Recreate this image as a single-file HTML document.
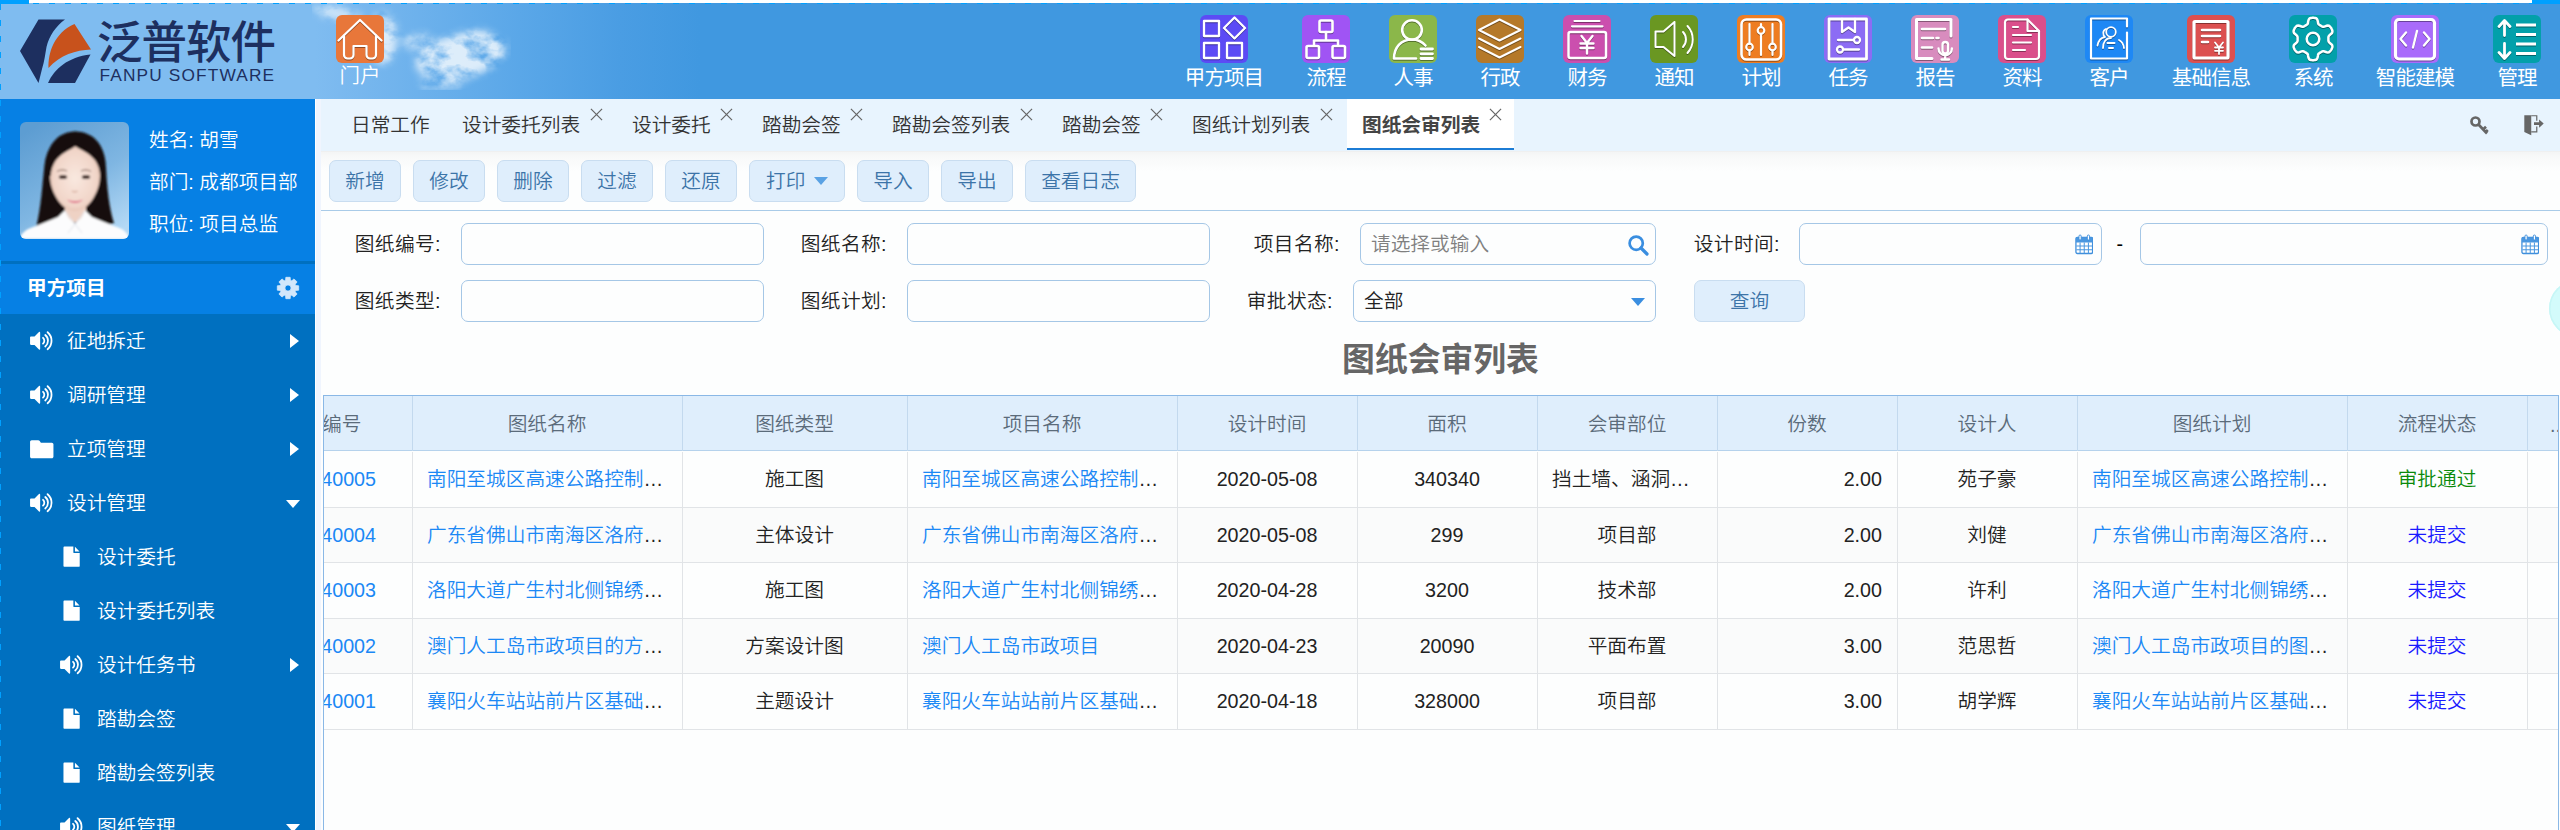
<!DOCTYPE html>
<html lang="zh-CN">
<head>
<meta charset="utf-8">
<title>图纸会审列表</title>
<style>
*{box-sizing:border-box;margin:0;padding:0}
html,body{width:2560px;height:830px;overflow:hidden;background:#fdfefe}
body{font-family:"Liberation Sans","Noto Sans CJK SC",sans-serif;font-size:19.7px;color:#222;position:relative;font-weight:350}
.abs{position:absolute}
/* top strip */
#strip{left:0;top:0;width:2560px;height:3px;background:#fff;z-index:5}
#strip .l{left:0;top:0;width:29px;height:4px;background:#00a0ff}
#strip .r{left:2532px;top:0;width:28px;height:4px;background:#00a0ff}
#dash{left:29px;top:3px;width:2503px;height:1px;background:repeating-linear-gradient(90deg,transparent 0,transparent 4px,#00a0ff 4px,#00a0ff 10px,transparent 10px,transparent 16px)}
/* header */
#header{left:0;top:3px;width:2560px;height:96px;background:linear-gradient(90deg,#7fbcf0 0,#7fbcf0 315px,#7bb9ef 340px,#5aa7e8 520px,#4a9de3 620px,#4098e0 700px,#4098e0 100%);overflow:hidden}
#logobg{left:0;top:0;width:315px;height:96px;background:#7fbcf0}
.nav{position:absolute;top:12px;width:120px;margin-left:-60px;text-align:center;color:#fff;font-size:20.5px;line-height:24px;white-space:nowrap;letter-spacing:-0.9px;font-weight:400}
.nav.home{font-size:20.5px;font-weight:350;line-height:20px;letter-spacing:0}
.nav .ic{display:block;width:48px;height:48px;border-radius:6px;margin:0 auto 2.5px;position:relative;overflow:hidden}
.nav .ic svg{position:absolute;left:0;top:0;width:48px;height:48px}
/* sidebar */
#side{left:0;top:99px;width:315px;height:731px;background:#0070c0;overflow:hidden;color:#fff}
#user{left:0;top:0;width:315px;height:162px;background:#0680e4}
#user .t{position:absolute;left:149px;font-size:19.7px;line-height:26px;letter-spacing:0;white-space:nowrap}
#sep{left:0;top:162px;width:315px;height:3px;background:#0070c0}
#mhead{left:0;top:165px;width:315px;height:50px;background:#0680e4;font-weight:700;font-size:19.7px;line-height:49px;padding-left:27px;letter-spacing:0}
.mi{position:absolute;left:0;width:315px;height:54px;line-height:54px;font-size:19.7px;letter-spacing:0;white-space:nowrap}
.mi .tx{position:absolute;left:67px;top:0}
.mi.sub .tx{left:97px}
.mi svg.i{position:absolute;left:28.5px;top:15px;width:25.5px;height:23.4px}
.mi.sub svg.i{left:58.5px}
.mi .ar{position:absolute;left:290px;top:20px;width:0;height:0;border-left:9px solid #fff;border-top:7px solid transparent;border-bottom:7px solid transparent}
.mi .ad{position:absolute;left:286px;top:24px;width:0;height:0;border-top:8px solid #fff;border-left:7px solid transparent;border-right:7px solid transparent}
#ledge{left:0;top:4px;width:1px;height:826px;background:repeating-linear-gradient(180deg,#00a0ff 0,#00a0ff 6px,transparent 6px,transparent 16px)}
/* gutter */
#gut{left:315px;top:99px;width:6px;height:731px;background:#f0f5fe;border-left:1px solid #fff}
/* tabs */
#tabs{left:321px;top:99px;width:2239px;height:52px;background:#e8f4fe}
.tab{position:absolute;top:0;height:52px;line-height:52px;font-size:19.7px;color:#333;white-space:nowrap;letter-spacing:0}
.tab .x{position:absolute;top:8px;width:14px;height:14px}
#tabact{left:1026px;top:0;width:167px;height:51px;background:#fff;border-bottom:2px solid #1c7cd5}
/* toolbar */
#tool{left:321px;top:151px;width:2239px;height:60px;background:linear-gradient(180deg,#ebebeb 0,#f4f5f5 1px,#f8f9f9 6px,#fdfefe 20px);border-bottom:1px solid #a9cbe8}
.btn{position:absolute;top:9px;height:42px;line-height:40px;border:1px solid #c9ddf0;background:#dfeefc;border-radius:7px;color:#3c74a8;font-size:19.7px;text-align:center;letter-spacing:0;white-space:nowrap}
/* form */
.lab{position:absolute;height:42px;line-height:42px;font-size:19.7px;color:#222;text-align:right;white-space:nowrap;letter-spacing:.4px}
.inp{position:absolute;height:42px;border:1px solid #a5c7e6;border-radius:7px;background:#fdfefe}
#title{left:321px;top:336px;width:2239px;text-align:center;font-size:32.8px;line-height:48px;font-weight:700;color:#666;letter-spacing:0}
/* table */
#tbl{left:323px;top:395px;width:2236px;height:435px;border-left:1px solid #8ab8e6;border-right:1px solid #8ab8e6;border-top:1px solid #8ab8e6;overflow:hidden}
#thead{left:0;top:0;width:2236px;height:55px;background:#dfeefc;border-bottom:1px solid #b5d2ec}
.th{position:absolute;top:0;height:55px;line-height:57px;text-align:center;color:#5b6b7a;font-size:19.7px;border-right:1px solid #c3d9ee;white-space:nowrap;letter-spacing:0}
.tr{position:absolute;left:0;width:2236px;height:55.5px;border-bottom:1px solid #e1e4e7}
.td{position:absolute;top:0;height:55px;line-height:54px;text-align:center;font-size:19.7px;border-right:1px solid #e1e4e7;white-space:nowrap;overflow:hidden;color:#222;letter-spacing:0}
.td.l{text-align:left;padding-left:15px}
.td.r{text-align:right;padding-right:15px}
.lk{color:#1b88f5}
</style>
</head>
<body>
<div id="strip" class="abs"><div class="l abs"></div><div class="r abs"></div></div>
<div id="header" class="abs">
  <div id="logobg" class="abs"></div>
  <svg class="abs" style="left:300px;top:0;width:260px;height:95px" viewBox="0 0 260 95">
<defs><filter id="cl" x="0" y="0" width="100%" height="100%" color-interpolation-filters="sRGB">
<feTurbulence type="fractalNoise" baseFrequency="0.045 0.06" numOctaves="4" seed="7" result="n"/>
<feColorMatrix in="n" type="matrix" values="0 0 0 0 1  0 0 0 0 1  0 0 0 0 1  2.6 0 0 0 -0.62" result="na"/>
<feGaussianBlur in="SourceGraphic" stdDeviation="4.5" result="b"/>
<feComposite in="b" in2="na" operator="in" result="c"/>
<feGaussianBlur in="c" stdDeviation="0.6"/>
</filter></defs>
<g filter="url(#cl)" fill="#fff" opacity=".78" transform="translate(-9 1)">
<ellipse cx="92" cy="34" rx="14" ry="26" opacity=".95"/>
<ellipse cx="48" cy="10" rx="26" ry="7" opacity=".8" transform="rotate(14 48 10)"/>
<ellipse cx="170" cy="52" rx="46" ry="22" opacity="1" transform="rotate(-12 170 52)"/>
<ellipse cx="185" cy="44" rx="26" ry="18" opacity="1"/>
<ellipse cx="160" cy="62" rx="30" ry="14" opacity="1"/>
<ellipse cx="128" cy="38" rx="16" ry="8" opacity=".8"/>
<ellipse cx="150" cy="80" rx="22" ry="6" opacity=".7"/>
</g></svg>
  <svg class="abs" style="left:18px;top:14px;width:76px;height:68px" viewBox="0 0 76 68">
<path d="M2 34L20.500 2.500H47C38 9 31 19 28.500 30 27 38 26.500 44 24 52L20.500 66z" fill="#1d2f5f"/>
<path d="M30.500 51C30 36 36 16 56.500 7L73 32.500C58 33 42 38 30.500 51z" fill="#c8521c"/>
<path d="M30 66C36 52 50 40 72.500 37.500L57 66z" fill="#1d2f5f"/>
</svg>
<div class="abs" style="left:97px;top:13px;width:190px;height:56px;font-size:45.500px;line-height:56px;font-weight:500;color:#1d2f5f;letter-spacing:-1px;white-space:nowrap">泛普软件</div>
<div class="abs" style="left:99.500px;top:61px;width:190px;height:22px;font-size:17.300px;line-height:22px;font-weight:400;color:#1d2f5f;letter-spacing:1.15px;white-space:nowrap">FANPU SOFTWARE</div>
  <div class="nav home" style="left:360px"><span class="ic" style="background:#e8773a"><svg viewBox="0 0 48 48"><g stroke="#fff" fill="none" stroke-linecap="round" stroke-linejoin="round" stroke-width="2.2" style="filter:drop-shadow(.7px 1px .5px rgba(0,0,0,.38))"><path d="M2.5 25.5L24 5l21.5 20.5"/><path d="M8 20.5V40a3.5 3.5 0 0 0 3.5 3.5h2.500a3.500 3.500 0 0 0 3.500-3.500V31h13v9a3.500 3.500 0 0 0 3.500 3.500h2.500A3.500 3.500 0 0 0 40 40V20.500"/></g></svg></span>门户</div>
<div class="nav" style="left:1224px"><span class="ic" style="background:#5c4bf5"><svg viewBox="0 0 48 48"><g stroke="#fff" fill="none" stroke-linecap="round" stroke-linejoin="round" stroke-width="2.3" style="filter:drop-shadow(.7px 1px .5px rgba(0,0,0,.38))"><rect x="4" y="6" width="15" height="15"/><path d="M34.500 2.500L45 13 34.500 23.500 24 13z"/><rect x="4" y="28" width="15" height="15"/><rect x="27" y="28" width="15" height="15"/></g></svg></span>甲方项目</div>
<div class="nav" style="left:1326px"><span class="ic" style="background:#a054f4"><svg viewBox="0 0 48 48"><g stroke="#fff" fill="none" stroke-linecap="round" stroke-linejoin="round" stroke-width="2.6" style="filter:drop-shadow(.7px 1px .5px rgba(0,0,0,.38))"><rect x="17.500" y="5.500" width="13" height="11.500" rx="1.500"/><path d="M24 17v8.500M12 30.500v-5h24v5"/><rect x="4.500" y="31" width="12.500" height="12" rx="1.500"/><rect x="30.500" y="31" width="12.500" height="12" rx="1.500"/></g></svg></span>流程</div>
<div class="nav" style="left:1413px"><span class="ic" style="background:#8bb74a"><svg viewBox="0 0 48 48"><g stroke="#fff" fill="none" stroke-linecap="round" stroke-linejoin="round" stroke-width="2.6" style="filter:drop-shadow(.7px 1px .5px rgba(0,0,0,.38))"><circle cx="23" cy="15" r="9.800"/><path d="M27 43.500H5c0-11 7-19 18-19 5.500 0 10 2 13.500 6"/><path d="M32 34h11.500M32 38.800h11.500M32 43.500h11.500" stroke-width="2.800"/></g></svg></span>人事</div>
<div class="nav" style="left:1500px"><span class="ic" style="background:#b57929"><svg viewBox="0 0 48 48"><g stroke="#fff" fill="none" stroke-linecap="round" stroke-linejoin="round" stroke-width="2" style="filter:drop-shadow(.7px 1px .5px rgba(0,0,0,.38))"><path d="M3 15L23.500 4.500 44.500 15 23.500 25.500z"/><path d="M3 23.500L23.500 34l21-10.500"/><path d="M3 32L23.500 42.500l21-10.500"/></g></svg></span>行政</div>
<div class="nav" style="left:1587px"><span class="ic" style="background:#cb4fae"><svg viewBox="0 0 48 48"><g stroke="#fff" fill="none" stroke-linecap="round" stroke-linejoin="round" stroke-width="2.5" style="filter:drop-shadow(.7px 1px .5px rgba(0,0,0,.38))"><path d="M11.500 6h25M9 11.300h30.500" stroke-width="2.200"/><rect x="5.500" y="17" width="37.500" height="26" rx="2"/><path d="M18.500 21l5.500 7 5.500-7M24 28V38.500M17.500 28.500h13M17.500 33h13" stroke-width="2.400"/></g></svg></span>财务</div>
<div class="nav" style="left:1674px"><span class="ic" style="background:#6a9722"><svg viewBox="0 0 48 48"><g stroke="#fff" fill="none" stroke-linecap="round" stroke-linejoin="round" stroke-width="2" style="filter:drop-shadow(.7px 1px .5px rgba(0,0,0,.38))"><path d="M5.500 16.500h8L24.500 7v34L13.500 32h-8z"/><path d="M33 17a11 11 0 0 1 0 15"/><path d="M37.500 11a20 20 0 0 1 0 27"/></g></svg></span>通知</div>
<div class="nav" style="left:1761px"><span class="ic" style="background:#ee7d22"><svg viewBox="0 0 48 48"><g stroke="#fff" fill="none" stroke-linecap="round" stroke-linejoin="round" stroke-width="2.2" style="filter:drop-shadow(.7px 1px .5px rgba(0,0,0,.38))"><rect x="4.500" y="4.500" width="39.500" height="40" rx="5" stroke-width="2.600"/><path d="M12.500 9v19.500M12.500 35.500V40M24 9v3M24 19v21M35.500 9v19.500M35.500 35.500V40"/><circle cx="12.500" cy="32" r="3.300"/><circle cx="24" cy="15.500" r="3.300"/><circle cx="35.500" cy="32" r="3.300"/></g></svg></span>计划</div>
<div class="nav" style="left:1848px"><span class="ic" style="background:#8c6cf4"><svg viewBox="0 0 48 48"><g stroke="#fff" fill="none" stroke-linecap="round" stroke-linejoin="round" stroke-width="2.3" style="filter:drop-shadow(.7px 1px .5px rgba(0,0,0,.38))"><rect x="5" y="4" width="37.500" height="40" stroke-width="2.800"/><path d="M18 4v13l6.500-4.500L31 17V4"/><path d="M14 25h15.500M19.500 34.500H35"/><circle cx="33" cy="25" r="3"/><circle cx="16" cy="34.500" r="3"/></g></svg></span>任务</div>
<div class="nav" style="left:1935px"><span class="ic" style="background:#d88cbe"><svg viewBox="0 0 48 48"><g stroke="#fff" fill="none" stroke-linecap="round" stroke-linejoin="round" stroke-width="2.4" style="filter:drop-shadow(.7px 1px .5px rgba(0,0,0,.38))"><path d="M40 21V4.500H5.500v39H21" stroke-width="3"/><path d="M11 14h23M11 23h11M25.500 23h2M11 32.500h10" stroke-width="2.600"/><rect x="31.500" y="27" width="5.500" height="11.500" rx="2.750" stroke-width="2.400"/><path d="M27.500 33.500a6.700 6.700 0 0 0 13.400 0M34.200 40.500v4M30.500 44.500h7.500" stroke-width="2.400"/></g></svg></span>报告</div>
<div class="nav" style="left:2022px"><span class="ic" style="background:#da4f8b"><svg viewBox="0 0 48 48"><g stroke="#fff" fill="none" stroke-linecap="round" stroke-linejoin="round" stroke-width="2.2" style="filter:drop-shadow(.7px 1px .5px rgba(0,0,0,.38))"><path d="M29.500 4.500H10a3 3 0 0 0-3 3v33.500a3 3 0 0 0 3 3h28a3 3 0 0 0 3-3V16z"/><path d="M29.500 4.500V16H41"/><path d="M15 12h5M15 20h18M15 27.500h18M15 35h12"/></g></svg></span>资料</div>
<div class="nav" style="left:2109px"><span class="ic" style="background:#1e88f5"><svg viewBox="0 0 48 48"><g stroke="#fff" fill="none" stroke-linecap="round" stroke-linejoin="round" stroke-width="1.8" style="filter:drop-shadow(.7px 1px .5px rgba(0,0,0,.38))"><path d="M42 11.500V3.500H6v40h36V17.500" stroke-width="2.200"/><circle cx="26" cy="17" r="4.800"/><path d="M18 33c0-6 3-10 8-10M34 25c3 1.500 4.500 4.500 5 8"/><path d="M12.500 30.500c1-5 4-8 7.500-8.500-2.500-2-2.500-6.500 1-8"/><path d="M22.500 28h7M24 33h4" stroke-width="2"/></g></svg></span>客户</div>
<div class="nav" style="left:2211px"><span class="ic" style="background:#dc5050"><svg viewBox="0 0 48 48"><g stroke="#fff" fill="none" stroke-linecap="round" stroke-linejoin="round" stroke-width="2.5" style="filter:drop-shadow(.7px 1px .5px rgba(0,0,0,.38))"><rect x="7" y="6.500" width="34" height="36.500" rx="1" stroke-width="3.200"/><path d="M15 15h18M15 21h18M15 27h6" stroke-width="2.600"/><path d="M28 27.500l4 5 4-5M32 32.500V39M28 32.500h8M28 35.800h8" stroke-width="1.800"/></g></svg></span>基础信息</div>
<div class="nav" style="left:2313px"><span class="ic" style="background:#02a0aa"><svg viewBox="0 0 48 48"><g stroke="#fff" fill="none" stroke-linecap="round" stroke-linejoin="round" stroke-width="2.5" style="filter:drop-shadow(.7px 1px .5px rgba(0,0,0,.38))"><path d="M39.4 24.0 L39.4 24.5 L39.4 25.1 L39.4 25.6 L39.5 26.2 L39.7 26.8 L40.2 27.4 L41.1 28.3 L42.2 29.2 L43.1 30.2 L43.4 31.1 L43.4 31.9 L43.3 32.6 L43.0 33.3 L42.7 33.9 L42.4 34.6 L42.0 35.2 L41.5 35.8 L41.1 36.4 L40.5 36.9 L39.8 37.3 L38.9 37.4 L37.6 37.2 L36.2 36.7 L35.1 36.3 L34.2 36.2 L33.6 36.3 L33.1 36.5 L32.6 36.8 L32.2 37.1 L31.7 37.3 L31.2 37.6 L30.8 37.9 L30.3 38.2 L29.9 38.5 L29.4 39.0 L29.1 39.7 L28.9 40.9 L28.6 42.4 L28.2 43.6 L27.6 44.4 L26.9 44.8 L26.2 45.0 L25.5 45.1 L24.7 45.2 L24.0 45.2 L23.3 45.2 L22.5 45.1 L21.8 45.0 L21.1 44.8 L20.4 44.4 L19.8 43.6 L19.4 42.4 L19.1 40.9 L18.9 39.7 L18.6 39.0 L18.1 38.5 L17.7 38.2 L17.2 37.9 L16.8 37.6 L16.3 37.3 L15.8 37.1 L15.4 36.8 L14.9 36.5 L14.4 36.3 L13.8 36.2 L12.9 36.3 L11.8 36.7 L10.4 37.2 L9.1 37.4 L8.2 37.3 L7.5 36.9 L6.9 36.4 L6.5 35.8 L6.0 35.2 L5.6 34.6 L5.3 33.9 L5.0 33.3 L4.7 32.6 L4.6 31.9 L4.6 31.1 L4.9 30.2 L5.8 29.2 L6.9 28.3 L7.8 27.4 L8.3 26.8 L8.5 26.2 L8.6 25.6 L8.6 25.1 L8.6 24.5 L8.6 24.0 L8.6 23.5 L8.6 22.9 L8.6 22.4 L8.5 21.8 L8.3 21.2 L7.8 20.6 L6.9 19.7 L5.8 18.8 L4.9 17.8 L4.6 16.9 L4.6 16.1 L4.7 15.4 L5.0 14.7 L5.3 14.1 L5.6 13.4 L6.0 12.8 L6.5 12.2 L6.9 11.6 L7.5 11.1 L8.2 10.7 L9.1 10.6 L10.4 10.8 L11.8 11.3 L12.9 11.7 L13.8 11.8 L14.4 11.7 L14.9 11.5 L15.4 11.2 L15.8 10.9 L16.3 10.7 L16.8 10.4 L17.2 10.1 L17.7 9.8 L18.1 9.5 L18.6 9.0 L18.9 8.3 L19.1 7.1 L19.4 5.6 L19.8 4.4 L20.4 3.6 L21.1 3.2 L21.8 3.0 L22.5 2.9 L23.3 2.8 L24.0 2.8 L24.7 2.8 L25.5 2.9 L26.2 3.0 L26.9 3.2 L27.6 3.6 L28.2 4.4 L28.6 5.6 L28.9 7.1 L29.1 8.3 L29.4 9.0 L29.9 9.5 L30.3 9.8 L30.8 10.1 L31.2 10.4 L31.7 10.7 L32.2 10.9 L32.6 11.2 L33.1 11.5 L33.6 11.7 L34.2 11.8 L35.1 11.7 L36.2 11.3 L37.6 10.8 L38.9 10.6 L39.8 10.7 L40.5 11.1 L41.1 11.6 L41.5 12.2 L42.0 12.8 L42.4 13.4 L42.7 14.1 L43.0 14.7 L43.3 15.4 L43.4 16.1 L43.4 16.9 L43.1 17.8 L42.2 18.8 L41.1 19.7 L40.2 20.6 L39.7 21.2 L39.5 21.8 L39.4 22.4 L39.4 22.9 L39.4 23.5z" stroke-linejoin="round"/><circle cx="24" cy="24" r="6.300"/></g></svg></span>系统</div>
<div class="nav" style="left:2415px"><span class="ic" style="background:#a96bfb"><svg viewBox="0 0 48 48"><g stroke="#fff" fill="none" stroke-linecap="round" stroke-linejoin="round" stroke-width="2.4" style="filter:drop-shadow(.7px 1px .5px rgba(0,0,0,.38))"><rect x="4.500" y="4.500" width="39" height="39.500" rx="3.500" stroke-width="3.200"/><path d="M15 17.500L9.500 24l5.500 6.500M33 17.500l5.500 6.500-5.500 6.500M26 16l-4 16.500" stroke-width="2.400"/></g></svg></span>智能建模</div>
<div class="nav" style="left:2517px"><span class="ic" style="background:#02a0aa"><svg viewBox="0 0 48 48"><g stroke="#fff" fill="none" stroke-linecap="round" stroke-linejoin="round" stroke-width="2.8" style="filter:drop-shadow(.7px 1px .5px rgba(0,0,0,.38))"><path d="M11.500 20.500v-14M6 11.500l5.500-6 5.500 6M11.500 28.500v14M6 37.500l5.500 6 5.500-6" stroke-width="2.800"/><path d="M23 10h20M23 19.500h20M23 29h20M23 38.500h20" stroke-width="3.200" stroke-linecap="butt"/></g></svg></span>管理</div>

</div>
<div id="dash" class="abs"></div>
<div id="side" class="abs">
  <div id="user" class="abs">
    <svg class="abs" style="left:20px;top:23px;width:109px;height:117px;border-radius:6px" viewBox="0 0 109 117">
<defs><linearGradient id="pg" x1="0.2" y1="0" x2="0.8" y2="1"><stop offset="0" stop-color="#5d9dd2"/><stop offset="0.55" stop-color="#7fb6e2"/><stop offset="1" stop-color="#b4d9f5"/></linearGradient>
<radialGradient id="fg" cx="0.5" cy="0.5" r="0.62"><stop offset="0" stop-color="#f9e8df"/><stop offset="0.7" stop-color="#f1d5c8"/><stop offset="1" stop-color="#d5ab99"/></radialGradient>
<clipPath id="hc"><path d="M16 106C21 86 22 66 24 48 26 24 38 9.500 55 9.500c18 0 30 13 31 36 1 20 3 40 8 56L70 106H40z"/></clipPath><filter id="pb" x="-10%" y="-10%" width="120%" height="120%"><feGaussianBlur stdDeviation="0.8"/></filter></defs>
<rect width="109" height="117" fill="url(#pg)"/>
<g filter="url(#pb)">
<path d="M16 106C21 86 22 66 24 48 26 24 38 9.500 55 9.500c18 0 30 13 31 36 1 20 3 40 8 56L70 106H40z" fill="#17110f"/>
<path d="M45 82h21v18H45z" fill="#efd2c4"/>
<path d="M31 54c0-10 3-20 10-25 4-3 9-5 14-5 6 0 11 2 15 5 7 6 10 15 10 25 0 7-2 14-6 21-5 9-12 14-19 14s-14-5-19-14c-4-7-6-14-6-21z" fill="url(#fg)"/>
<g clip-path="url(#hc)"><path d="M55.500 9L20 20l9 38c2-8 3-15 8-21 5-6 13-9 18.500-13z" fill="#17110f"/>
<path d="M55 9l35 11-8 38c-2-8-3-15-8-21-5-6-13-9-19-13z" fill="#17110f"/></g>
<path d="M0 117c1-6 6-10 16-13l22-9 7-7c2 7 6 11 10 13 4-2 8-6 10-13l7 7 22 9c10 3 14 7 15 13z" fill="#fcfcfd"/>
<path d="M45 89l10 13-7 9M65 89L55 102l7 9" fill="none" stroke="#dfe3ea" stroke-width="1"/>
<ellipse cx="43" cy="55" rx="4.200" ry="2" fill="#3a2723"/><ellipse cx="66" cy="55" rx="4.200" ry="2" fill="#3a2723"/>
<path d="M37 49.500c3-2 7-2 10-.5M61 49c3-1.500 7-1.500 10 .500" stroke="#7a5c52" stroke-width="1" fill="none"/>
<path d="M52 69c1.500 1 4 1 5.500 0" stroke="#d6ab9b" stroke-width="1.300" fill="none"/>
<path d="M47 77.500c5 2 11 2 16 0-3 4.500-13 4.500-16 0z" fill="#e0708a"/>
</g>
</svg>
    <div class="t" style="top:28px">姓名: 胡雪</div>
    <div class="t" style="top:70px">部门: 成都项目部</div>
    <div class="t" style="top:112px">职位: 项目总监</div>
  </div>
  <div id="sep" class="abs"></div>
  <div id="mhead" class="abs">甲方项目<svg class="abs" style="left:276px;top:12px;width:24px;height:24px" viewBox="0 0 24 24"><path fill="#d2e7fb" fill-rule="evenodd" stroke="#d2e7fb" stroke-width=".8" stroke-linejoin="round" d="M9.83 1.32L14.17 1.32L14.39 4.26L15.78 4.84L18.02 2.91L21.09 5.98L19.16 8.22L19.74 9.61L22.68 9.83L22.68 14.17L19.74 14.39L19.16 15.78L21.09 18.02L18.02 21.09L15.78 19.16L14.39 19.74L14.17 22.68L9.83 22.68L9.61 19.74L8.22 19.16L5.98 21.09L2.91 18.02L4.84 15.78L4.26 14.39L1.32 14.17L1.32 9.83L4.26 9.61L4.84 8.22L2.91 5.98L5.98 2.91L8.22 4.84L9.61 4.26zM15.10 12a3.1 3.1 0 1 0 -6.2 0a3.1 3.1 0 1 0 6.2 0z"/></svg></div>
  <div class="mi" style="top:215px"><svg class="i" viewBox="0 0 24 22"><path fill="#fff" d="M10.500 3.200v15.600c0 .6-.7.900-1.100.5L5.200 15H1.800c-.5 0-.8-.4-.8-.8V7.800c0-.5.400-.8.800-.8h3.400l4.200-4.300c.4-.4 1.100-.1 1.100.5z"/><g fill="none" stroke="#fff" stroke-width="1.700" stroke-linecap="round"><path d="M13.200 8.300a3.600 3.600 0 0 1 0 5.400"/><path d="M15.300 5.600a7 7 0 0 1 0 10.800"/><path d="M17.500 3a10.500 10.500 0 0 1 0 16"/></g></svg><span class="tx">征地拆迁</span><i class=ar></i></div>
<div class="mi" style="top:269px"><svg class="i" viewBox="0 0 24 22"><path fill="#fff" d="M10.500 3.200v15.600c0 .6-.7.900-1.100.5L5.200 15H1.800c-.5 0-.8-.4-.8-.8V7.800c0-.5.400-.8.800-.8h3.400l4.200-4.300c.4-.4 1.100-.1 1.100.5z"/><g fill="none" stroke="#fff" stroke-width="1.700" stroke-linecap="round"><path d="M13.200 8.300a3.600 3.600 0 0 1 0 5.400"/><path d="M15.300 5.600a7 7 0 0 1 0 10.800"/><path d="M17.500 3a10.500 10.500 0 0 1 0 16"/></g></svg><span class="tx">调研管理</span><i class=ar></i></div>
<div class="mi" style="top:323px"><svg class="i" viewBox="0 0 24 22"><path fill="#fff" d="M1 4.500C1 3.700 1.700 3 2.500 3h6.200c.5 0 .9.200 1.200.6l1.300 1.800h10.300c.8 0 1.500.7 1.500 1.500v11.600c0 .8-.7 1.500-1.500 1.500h-19C1.700 20 1 19.300 1 18.500z"/></svg><span class="tx">立项管理</span><i class=ar></i></div>
<div class="mi" style="top:377px"><svg class="i" viewBox="0 0 24 22"><path fill="#fff" d="M10.500 3.200v15.600c0 .6-.7.900-1.100.5L5.200 15H1.800c-.5 0-.8-.4-.8-.8V7.800c0-.5.400-.8.800-.8h3.400l4.200-4.300c.4-.4 1.100-.1 1.100.5z"/><g fill="none" stroke="#fff" stroke-width="1.700" stroke-linecap="round"><path d="M13.200 8.300a3.600 3.600 0 0 1 0 5.400"/><path d="M15.300 5.600a7 7 0 0 1 0 10.800"/><path d="M17.500 3a10.500 10.500 0 0 1 0 16"/></g></svg><span class="tx">设计管理</span><i class=ad></i></div>
<div class="mi sub" style="top:431px"><svg class="i" viewBox="0 0 24 22"><path fill="#fff" d="M5 1.500h8.500v5.200c0 .5.400.8.800.8H19.500v12.200c0 .5-.4.800-.8.800H5c-.5 0-.8-.4-.8-.8V2.300c0-.5.400-.8.800-.8zM15 1.700l4.300 4.300H15z"/></svg><span class="tx">设计委托</span></div>
<div class="mi sub" style="top:485px"><svg class="i" viewBox="0 0 24 22"><path fill="#fff" d="M5 1.500h8.500v5.200c0 .5.400.8.800.8H19.500v12.200c0 .5-.4.800-.8.800H5c-.5 0-.8-.4-.8-.8V2.300c0-.5.400-.8.800-.8zM15 1.700l4.300 4.300H15z"/></svg><span class="tx">设计委托列表</span></div>
<div class="mi sub" style="top:539px"><svg class="i" viewBox="0 0 24 22"><path fill="#fff" d="M10.500 3.200v15.600c0 .6-.7.900-1.100.5L5.200 15H1.800c-.5 0-.8-.4-.8-.8V7.800c0-.5.400-.8.800-.8h3.400l4.200-4.300c.4-.4 1.100-.1 1.100.5z"/><g fill="none" stroke="#fff" stroke-width="1.700" stroke-linecap="round"><path d="M13.200 8.300a3.600 3.600 0 0 1 0 5.400"/><path d="M15.300 5.600a7 7 0 0 1 0 10.800"/><path d="M17.500 3a10.500 10.500 0 0 1 0 16"/></g></svg><span class="tx">设计任务书</span><i class=ar></i></div>
<div class="mi sub" style="top:593px"><svg class="i" viewBox="0 0 24 22"><path fill="#fff" d="M5 1.500h8.500v5.200c0 .5.400.8.800.8H19.500v12.200c0 .5-.4.800-.8.800H5c-.5 0-.8-.4-.8-.8V2.300c0-.5.400-.8.800-.8zM15 1.700l4.300 4.300H15z"/></svg><span class="tx">踏勘会签</span></div>
<div class="mi sub" style="top:647px"><svg class="i" viewBox="0 0 24 22"><path fill="#fff" d="M5 1.500h8.500v5.200c0 .5.400.8.800.8H19.500v12.200c0 .5-.4.800-.8.800H5c-.5 0-.8-.4-.8-.8V2.300c0-.5.400-.8.800-.8zM15 1.700l4.300 4.300H15z"/></svg><span class="tx">踏勘会签列表</span></div>
<div class="mi sub" style="top:701px"><svg class="i" viewBox="0 0 24 22"><path fill="#fff" d="M10.500 3.200v15.600c0 .6-.7.900-1.100.5L5.200 15H1.800c-.5 0-.8-.4-.8-.8V7.800c0-.5.400-.8.800-.8h3.400l4.200-4.300c.4-.4 1.100-.1 1.100.5z"/><g fill="none" stroke="#fff" stroke-width="1.700" stroke-linecap="round"><path d="M13.200 8.300a3.600 3.600 0 0 1 0 5.400"/><path d="M15.300 5.600a7 7 0 0 1 0 10.800"/><path d="M17.500 3a10.500 10.500 0 0 1 0 16"/></g></svg><span class="tx">图纸管理</span><i class=ad></i></div>

</div>
<div id="ledge" class="abs"></div>
<div id="gut" class="abs"></div>
<div id="tabs" class="abs">
  <div id="tabact" class="abs"></div>
<div class="tab" style="left:30px;">日常工作</div>
<div class="tab" style="left:141px;">设计委托列表</div><svg class="x abs" style="top:9px;width:13px;height:13px;left:269px" viewBox="0 0 14 14"><path d="M1 1l12 12M13 1L1 13" stroke="#666" stroke-width="1.300" fill="none"/></svg>
<div class="tab" style="left:311px;">设计委托</div><svg class="x abs" style="top:9px;width:13px;height:13px;left:399px" viewBox="0 0 14 14"><path d="M1 1l12 12M13 1L1 13" stroke="#666" stroke-width="1.300" fill="none"/></svg>
<div class="tab" style="left:441px;">踏勘会签</div><svg class="x abs" style="top:9px;width:13px;height:13px;left:529px" viewBox="0 0 14 14"><path d="M1 1l12 12M13 1L1 13" stroke="#666" stroke-width="1.300" fill="none"/></svg>
<div class="tab" style="left:571px;">踏勘会签列表</div><svg class="x abs" style="top:9px;width:13px;height:13px;left:699px" viewBox="0 0 14 14"><path d="M1 1l12 12M13 1L1 13" stroke="#666" stroke-width="1.300" fill="none"/></svg>
<div class="tab" style="left:741px;">踏勘会签</div><svg class="x abs" style="top:9px;width:13px;height:13px;left:829px" viewBox="0 0 14 14"><path d="M1 1l12 12M13 1L1 13" stroke="#666" stroke-width="1.300" fill="none"/></svg>
<div class="tab" style="left:871px;">图纸计划列表</div><svg class="x abs" style="top:9px;width:13px;height:13px;left:999px" viewBox="0 0 14 14"><path d="M1 1l12 12M13 1L1 13" stroke="#666" stroke-width="1.300" fill="none"/></svg>
<div class="tab" style="left:1041px;font-weight:700;color:#444;">图纸会审列表</div><svg class="x abs" style="top:9px;width:13px;height:13px;left:1168px" viewBox="0 0 14 14"><path d="M1 1l12 12M13 1L1 13" stroke="#666" stroke-width="1.300" fill="none"/></svg>
<svg class="abs" style="left:2146px;top:14px;width:24px;height:24px" viewBox="0 0 24 24"><g fill="none" stroke="#666" stroke-width="2.700"><circle cx="8.500" cy="8.500" r="4"/><path d="M11.500 11.500l8.500 9M16 16.500l3-2.800M18.500 19.200l2.300-2.200" stroke-linecap="butt"/></g></svg>
<svg class="abs" style="left:2201px;top:14px;width:24px;height:24px" viewBox="0 0 26 26"><path d="M2.500 2.500v18l7.500 3.500v-21.500z" fill="#666"/><path d="M10 3h6v5.500M16 14.500V20.500h-6" fill="none" stroke="#666" stroke-width="1.300"/><path d="M13 10h5.500V7l5 4.500-5 4.500v-3H13z" fill="#666"/></svg>
</div>
<div id="tool" class="abs">
  <div class="btn" style="left:8px;width:72px">新增</div>
<div class="btn" style="left:92px;width:72px">修改</div>
<div class="btn" style="left:176px;width:72px">删除</div>
<div class="btn" style="left:260px;width:72px">过滤</div>
<div class="btn" style="left:344px;width:72px">还原</div>
<div class="btn" style="left:428px;width:96px">打印 <i style="display:inline-block;vertical-align:middle;margin:0 0 3px 3px;border-top:8px solid #5aa2e4;border-left:7px solid transparent;border-right:7px solid transparent"></i></div>
<div class="btn" style="left:536px;width:72px">导入</div>
<div class="btn" style="left:620px;width:72px">导出</div>
<div class="btn" style="left:704px;width:111px">查看日志</div>

</div>

<div class="lab" style="left:341px;top:223px;width:100px">图纸编号:</div><div class="inp" style="left:461px;top:223px;width:303px"></div>
<div class="lab" style="left:787px;top:223px;width:100px">图纸名称:</div><div class="inp" style="left:907px;top:223px;width:303px"></div>
<div class="lab" style="left:1240px;top:223px;width:100px">项目名称:</div><div class="inp" style="left:1360px;top:223px;width:296px"><span class="abs" style="left:10px;top:0;line-height:40px;color:#808080;font-size:19.700px;letter-spacing:0">请选择或输入</span><svg class="abs" style="right:6px;top:10px;width:22px;height:22px" viewBox="0 0 22 22"><circle cx="9.200" cy="9.200" r="6.600" fill="none" stroke="#3a8ee0" stroke-width="2.700"/><path d="M14 14l6 6" stroke="#3a8ee0" stroke-width="3.200" stroke-linecap="round"/></svg></div>
<div class="lab" style="left:1680px;top:223px;width:100px">设计时间:</div><div class="inp" style="left:1799px;top:223px;width:303px"><svg class="abs" style="right:8px;top:10px;width:18.500px;height:20.500px" viewBox="0 0 20 22"><rect x="1" y="3.500" width="18" height="17.500" rx="1.500" fill="#fff" stroke="#3f8fdc" stroke-width="1.400"/><path d="M1 4.500a1 1 0 0 1 1-1h16a1 1 0 0 1 1 1V9H1z" fill="#4a97e0"/><path d="M1.500 13h17M1.500 17h17M5.500 9v12M10 9v12M14.500 9v12" stroke="#4a97e0" stroke-width="1.100"/><rect x="4.300" y="1" width="2.400" height="5.500" rx="1.200" fill="#fff" stroke="#3f8fdc" stroke-width="1"/><rect x="13.300" y="1" width="2.400" height="5.500" rx="1.200" fill="#fff" stroke="#3f8fdc" stroke-width="1"/></svg></div>
<div class="lab" style="left:2110px;top:223px;width:20px;text-align:center;color:#000">-</div><div class="inp" style="left:2140px;top:223px;width:408px"><svg class="abs" style="right:8px;top:10px;width:18.500px;height:20.500px" viewBox="0 0 20 22"><rect x="1" y="3.500" width="18" height="17.500" rx="1.500" fill="#fff" stroke="#3f8fdc" stroke-width="1.400"/><path d="M1 4.500a1 1 0 0 1 1-1h16a1 1 0 0 1 1 1V9H1z" fill="#4a97e0"/><path d="M1.500 13h17M1.500 17h17M5.500 9v12M10 9v12M14.500 9v12" stroke="#4a97e0" stroke-width="1.100"/><rect x="4.300" y="1" width="2.400" height="5.500" rx="1.200" fill="#fff" stroke="#3f8fdc" stroke-width="1"/><rect x="13.300" y="1" width="2.400" height="5.500" rx="1.200" fill="#fff" stroke="#3f8fdc" stroke-width="1"/></svg></div>
<div class="lab" style="left:341px;top:280px;width:100px">图纸类型:</div><div class="inp" style="left:461px;top:280px;width:303px"></div>
<div class="lab" style="left:787px;top:280px;width:100px">图纸计划:</div><div class="inp" style="left:907px;top:280px;width:303px"></div>
<div class="lab" style="left:1233px;top:280px;width:100px">审批状态:</div><div class="inp" style="left:1353px;top:280px;width:303px"><span class="abs" style="left:10px;top:0;line-height:40px;color:#222">全部</span><i class="abs" style="right:10px;top:17px;border-top:8px solid #3a8ee0;border-left:7px solid transparent;border-right:7px solid transparent"></i></div>
<div class="btn" style="left:1694px;top:280px;width:111px">查询</div>
<div class="abs" style="left:2549px;top:280px;width:57px;height:57px;border-radius:50%;background:#d3fbfb;box-shadow:inset 0 0 0 1.500px #c6f6f6"></div>

<div id="title" class="abs">图纸会审列表</div>
<div id="tbl" class="abs">
  <div id="thead" class="abs"><div class="th" style="left:-92px;width:181px">图纸编号</div><div class="th" style="left:88px;width:271px">图纸名称</div><div class="th" style="left:358px;width:226px">图纸类型</div><div class="th" style="left:583px;width:271px">项目名称</div><div class="th" style="left:853px;width:181px">设计时间</div><div class="th" style="left:1033px;width:181px">面积</div><div class="th" style="left:1213px;width:181px">会审部位</div><div class="th" style="left:1393px;width:181px">份数</div><div class="th" style="left:1573px;width:181px">设计人</div><div class="th" style="left:1753px;width:271px">图纸计划</div><div class="th" style="left:2023px;width:181px">流程状态</div><div class="th" style="left:2203px;width:181px"></div><div class="abs" style="left:2226px;top:0;line-height:58px;color:#5b6b7a">..</div></div>
  <div class="tr" style="top:56.0px;background:#fdfefe"><div class="td lk" style="left:-92px;width:181px;text-align:right;padding-right:36px">40005</div><div class="td l lk" style="left:88px;width:271px;">南阳至城区高速公路控制<span style="color:#222">…</span></div><div class="td " style="left:358px;width:226px;">施工图</div><div class="td l lk" style="left:583px;width:271px;">南阳至城区高速公路控制<span style="color:#222">…</span></div><div class="td " style="left:853px;width:181px;">2020-05-08</div><div class="td " style="left:1033px;width:181px;">340340</div><div class="td l" style="left:1213px;width:181px;">挡土墙、涵洞…</div><div class="td r" style="left:1393px;width:181px;">2.00</div><div class="td " style="left:1573px;width:181px;">苑子豪</div><div class="td l lk" style="left:1753px;width:271px;">南阳至城区高速公路控制<span style="color:#222">…</span></div><div class="td " style="left:2023px;width:181px;color:#0a8a0a">审批通过</div><div class="td " style="left:2203px;width:181px;"></div></div>
<div class="tr" style="top:111.5px;background:#fafbfb"><div class="td lk" style="left:-92px;width:181px;text-align:right;padding-right:36px">40004</div><div class="td l lk" style="left:88px;width:271px;">广东省佛山市南海区洛府<span style="color:#222">…</span></div><div class="td " style="left:358px;width:226px;">主体设计</div><div class="td l lk" style="left:583px;width:271px;">广东省佛山市南海区洛府<span style="color:#222">…</span></div><div class="td " style="left:853px;width:181px;">2020-05-08</div><div class="td " style="left:1033px;width:181px;">299</div><div class="td " style="left:1213px;width:181px;">项目部</div><div class="td r" style="left:1393px;width:181px;">2.00</div><div class="td " style="left:1573px;width:181px;">刘健</div><div class="td l lk" style="left:1753px;width:271px;">广东省佛山市南海区洛府<span style="color:#222">…</span></div><div class="td " style="left:2023px;width:181px;color:#1a1aff">未提交</div><div class="td " style="left:2203px;width:181px;"></div></div>
<div class="tr" style="top:167.0px;background:#fdfefe"><div class="td lk" style="left:-92px;width:181px;text-align:right;padding-right:36px">40003</div><div class="td l lk" style="left:88px;width:271px;">洛阳大道广生村北侧锦绣<span style="color:#222">…</span></div><div class="td " style="left:358px;width:226px;">施工图</div><div class="td l lk" style="left:583px;width:271px;">洛阳大道广生村北侧锦绣<span style="color:#222">…</span></div><div class="td " style="left:853px;width:181px;">2020-04-28</div><div class="td " style="left:1033px;width:181px;">3200</div><div class="td " style="left:1213px;width:181px;">技术部</div><div class="td r" style="left:1393px;width:181px;">2.00</div><div class="td " style="left:1573px;width:181px;">许利</div><div class="td l lk" style="left:1753px;width:271px;">洛阳大道广生村北侧锦绣<span style="color:#222">…</span></div><div class="td " style="left:2023px;width:181px;color:#1a1aff">未提交</div><div class="td " style="left:2203px;width:181px;"></div></div>
<div class="tr" style="top:222.5px;background:#fafbfb"><div class="td lk" style="left:-92px;width:181px;text-align:right;padding-right:36px">40002</div><div class="td l lk" style="left:88px;width:271px;">澳门人工岛市政项目的方<span style="color:#222">…</span></div><div class="td " style="left:358px;width:226px;">方案设计图</div><div class="td l lk" style="left:583px;width:271px;">澳门人工岛市政项目</div><div class="td " style="left:853px;width:181px;">2020-04-23</div><div class="td " style="left:1033px;width:181px;">20090</div><div class="td " style="left:1213px;width:181px;">平面布置</div><div class="td r" style="left:1393px;width:181px;">3.00</div><div class="td " style="left:1573px;width:181px;">范思哲</div><div class="td l lk" style="left:1753px;width:271px;">澳门人工岛市政项目的图<span style="color:#222">…</span></div><div class="td " style="left:2023px;width:181px;color:#1a1aff">未提交</div><div class="td " style="left:2203px;width:181px;"></div></div>
<div class="tr" style="top:278.0px;background:#fdfefe"><div class="td lk" style="left:-92px;width:181px;text-align:right;padding-right:36px">40001</div><div class="td l lk" style="left:88px;width:271px;">襄阳火车站站前片区基础<span style="color:#222">…</span></div><div class="td " style="left:358px;width:226px;">主题设计</div><div class="td l lk" style="left:583px;width:271px;">襄阳火车站站前片区基础<span style="color:#222">…</span></div><div class="td " style="left:853px;width:181px;">2020-04-18</div><div class="td " style="left:1033px;width:181px;">328000</div><div class="td " style="left:1213px;width:181px;">项目部</div><div class="td r" style="left:1393px;width:181px;">3.00</div><div class="td " style="left:1573px;width:181px;">胡学辉</div><div class="td l lk" style="left:1753px;width:271px;">襄阳火车站站前片区基础<span style="color:#222">…</span></div><div class="td " style="left:2023px;width:181px;color:#1a1aff">未提交</div><div class="td " style="left:2203px;width:181px;"></div></div>

</div>
</body>
</html>
